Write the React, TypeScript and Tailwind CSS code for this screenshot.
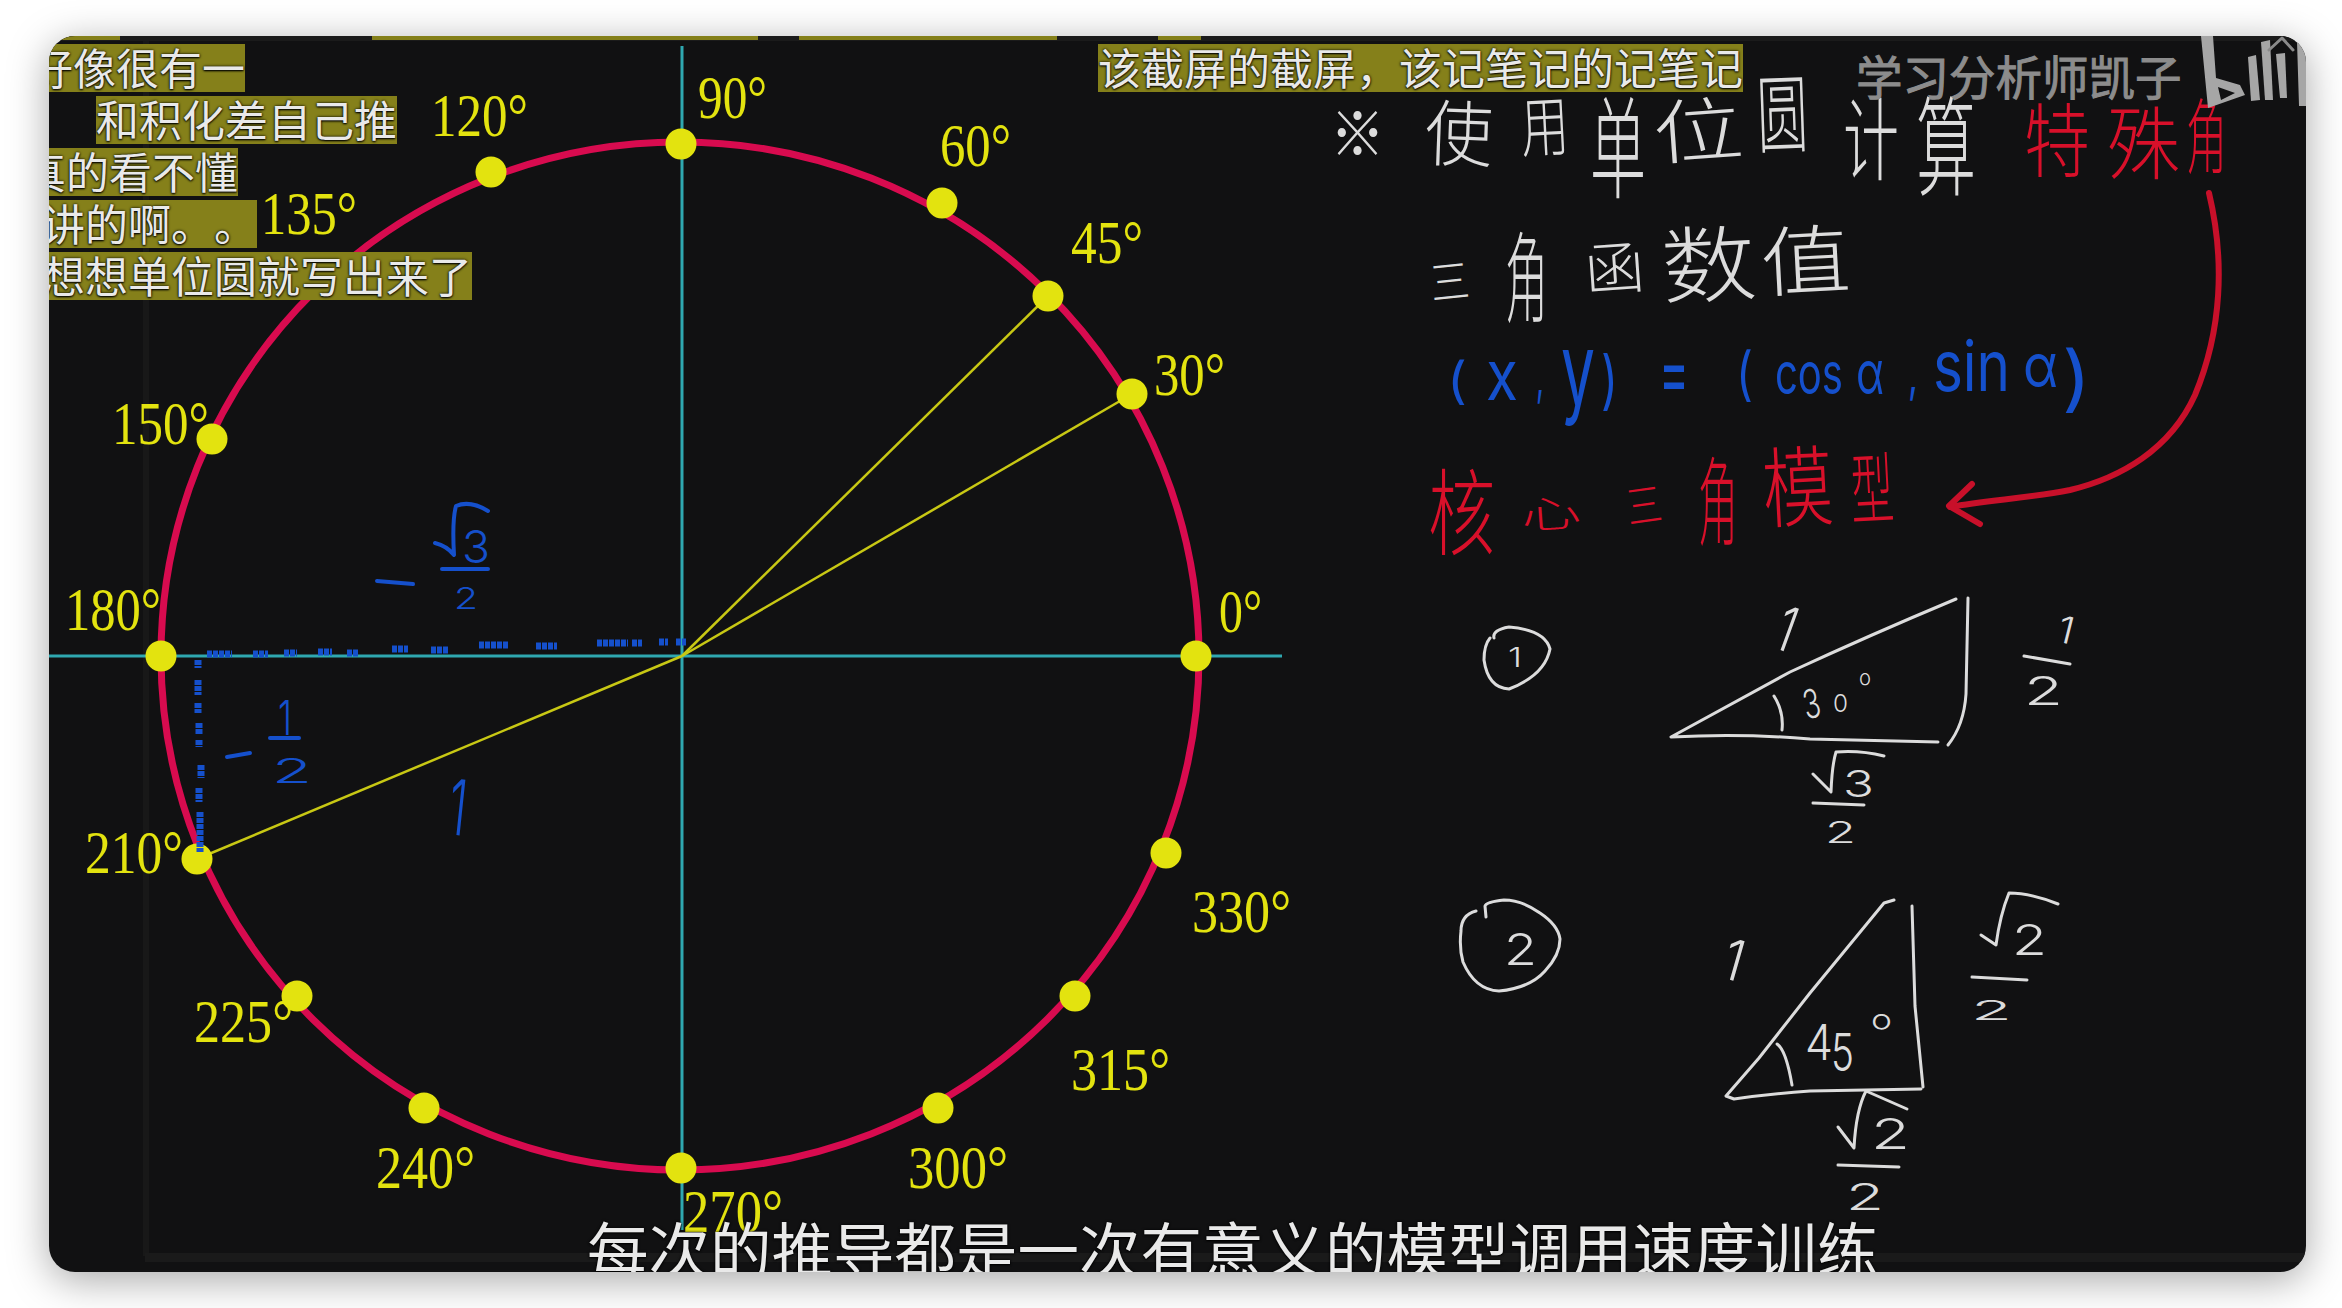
import React from "react";

const WHITE = "#dcdcdc";
const RED = "#d8102a";
const BLUE = "#1550cc";
const YELLOW = "#e3e30f";
const CJK = "'Noto Sans CJK SC', sans-serif";
const NUM = "Inter, sans-serif";

// 单位圆上的点
const DOTS = [
  [681, 144], [942, 203], [1048, 296], [1132, 394], [1196, 656], [1166, 853],
  [1075, 996], [938, 1108], [681, 1168], [424, 1108], [297, 996], [197, 859],
  [161, 656], [212, 439], [491, 172],
];

// label, x, width, baseline
const LABELS: [string, number, number, number][] = [
  ["90°", 698, 69, 118], ["120°", 431, 97, 136], ["135°", 261, 96, 234],
  ["150°", 112, 97, 444], ["60°", 940, 71, 166], ["45°", 1071, 72, 263],
  ["30°", 1154, 71, 395], ["0°", 1219, 43, 632], ["180°", 65, 96, 630],
  ["210°", 85, 98, 873], ["330°", 1192, 99, 932], ["225°", 194, 99, 1042],
  ["315°", 1071, 99, 1090], ["240°", 376, 99, 1188], ["300°", 908, 100, 1188],
  ["270°", 683, 100, 1232],
];

const DASHES_H = [
  [207, 232, 654], [253, 268, 654], [284, 297, 653], [318, 332, 652], [347, 358, 653],
  [392, 408, 649], [431, 449, 650], [479, 508, 645], [536, 557, 646], [597, 628, 643],
  [632, 642, 643], [659, 668, 642], [676, 686, 642],
];
const DASHES_V = [
  [198, 660, 668], [198, 680, 695], [198, 703, 713], [199, 723, 735],
  [199, 740, 747], [201, 765, 778], [199, 788, 802], [200, 812, 852],
];

// 手写汉字: box = [x0, y0, x1, y1]
const Hand = ({ t, b, fill = WHITE, rot = 0 }: { t: string; b: number[]; fill?: string; rot?: number }) => {
  const w = b[2] - b[0];
  const h = b[3] - b[1];
  return (
    <text
      transform={`translate(${b[0]} ${b[1] + 0.88 * h}) rotate(${rot}) scale(${w / 100} ${h / 100})`}
      fontSize={100}
      fontFamily={CJK}
      fontWeight={300}
      fill={fill}
    >
      {t}
    </text>
  );
};

// 手写数字: box = [x0, y0, x1, y1]
const Digit = ({ t, b, fill = WHITE, rot = 0 }: { t: string; b: number[]; fill?: string; rot?: number }) => (
  <text
    x={b[0]}
    y={b[3]}
    fontSize={(b[3] - b[1]) / 0.727}
    textLength={b[2] - b[0]}
    lengthAdjust="spacingAndGlyphs"
    fontFamily={NUM}
    fontWeight={300}
    fill={fill}
    transform={rot ? `rotate(${rot} ${(b[0] + b[2]) / 2} ${(b[1] + b[3]) / 2})` : undefined}
  >
    {t}
  </text>
);

const Formula = ({ t, x, w, y, fs }: { t: string; x: number; w: number; y: number; fs: number }) => (
  <text x={x} y={y} fontSize={fs} textLength={w} lengthAdjust="spacingAndGlyphs" fontFamily={NUM} fontWeight={400} fill={BLUE}>
    {t}
  </text>
);

const Ink = ({ d, color = WHITE, width = 3 }: { d: string; color?: string; width?: number }) => (
  <path d={d} fill="none" stroke={color} strokeWidth={width} strokeLinecap="round" strokeLinejoin="round" />
);

const Board = () => (
  <svg className="absolute inset-0 h-full w-full" viewBox="49 36 2257 1236">
    {/* 视频边框 */}
    <rect x="49" y="36" width="2257" height="5" fill="#1b1b1b" />
    <rect x="143" y="41" width="6" height="1215" fill="#181818" />
    <rect x="145" y="1253" width="2161" height="9" fill="#1a1a1a" />

    {/* 坐标轴 */}
    <line x1="49" y1="656" x2="1282" y2="656" stroke="#2fa8b0" strokeWidth="3" />
    <line x1="682" y1="46" x2="682" y2="1230" stroke="#2fa8b0" strokeWidth="3" />
    <ellipse cx="680" cy="656" rx="519" ry="514" fill="none" stroke="#d80b4f" strokeWidth="7" />
    <g stroke="#c8c814" strokeWidth="2.5">
      <line x1="682" y1="656" x2="1048" y2="296" />
      <line x1="682" y1="656" x2="1132" y2="394" />
      <line x1="682" y1="656" x2="197" y2="859" />
    </g>
    {LABELS.map(([t, x, w, y]) => (
      <text key={t} x={x} y={y} fontSize={62} textLength={w} lengthAdjust="spacingAndGlyphs" fontFamily="'Liberation Serif', serif" fill={YELLOW}>
        {t}
      </text>
    ))}
    {DOTS.map(([x, y]) => (
      <circle key={`${x}-${y}`} cx={x} cy={y} r="15.5" fill={YELLOW} />
    ))}

    {/* 蓝色虚线和标注 */}
    <g stroke={BLUE} strokeWidth="7" strokeDasharray="5 1">
      {DASHES_H.map(([a, b, y]) => <line key={a} x1={a} y1={y} x2={b} y2={y} />)}
      {DASHES_V.map(([x, a, b]) => <line key={a} x1={x} y1={a} x2={x} y2={b} />)}
    </g>
    <Ink d="M377 581 L413 584" color={BLUE} width={4} />
    <Ink d="M435 543 Q447 546 454 555 Q452 520 456 506 Q470 500 488 511" color={BLUE} width={4} />
    <Digit t="3" b={[462, 530, 490, 563]} fill={BLUE} />
    <Ink d="M442 569 L488 569" color={BLUE} width={4} />
    <Digit t="2" b={[454, 587, 478, 609]} fill={BLUE} />
    <Ink d="M227 757 L250 753" color={BLUE} width={4} />
    <Digit t="1" b={[278, 700, 292, 735]} fill={BLUE} />
    <Ink d="M270 738 L299 738" color={BLUE} width={4} />
    <Digit t="2" b={[272, 758, 312, 783]} fill={BLUE} />
    <Digit t="1" b={[449, 779, 467, 835]} fill={BLUE} rot={6} />

    {/* 板书 */}
    <Hand t="※" b={[1330, 103, 1385, 163]} />
    <Hand t="使" b={[1424, 96, 1492, 168]} rot={2} />
    <Hand t="用" b={[1522, 94, 1570, 160]} rot={-3} />
    <Hand t="单" b={[1590, 92, 1646, 203]} />
    <Hand t="位" b={[1655, 98, 1745, 168]} rot={-4} />
    <Hand t="圆" b={[1758, 71, 1809, 157]} rot={-2} />
    <Hand t="计" b={[1843, 94, 1899, 184]} />
    <Hand t="算" b={[1916, 92, 1976, 200]} />
    <Hand t="特" b={[2024, 100, 2090, 180]} fill={RED} />
    <Hand t="殊" b={[2107, 103, 2180, 182]} fill={RED} />
    <Hand t="角" b={[2186, 95, 2227, 177]} fill={RED} />

    <Hand t="三" b={[1432, 260, 1471, 306]} rot={-6} />
    <Hand t="角" b={[1505, 228, 1548, 327]} />
    <Hand t="函" b={[1586, 241, 1646, 298]} rot={-4} />
    <Hand t="数" b={[1663, 224, 1758, 308]} rot={-3} />
    <Hand t="值" b={[1762, 224, 1852, 300]} rot={-3} />

    <Formula t="(" x={1447} w={20} y={398} fs={50} />
    <Formula t="x" x={1486} w={32} y={400} fs={70} />
    <Formula t="," x={1536} w={8} y={395} fs={50} />
    <Formula t="y" x={1561} w={34} y={405} fs={100} />
    <Formula t=")" x={1601} w={17} y={402} fs={64} />
    <Formula t="=" x={1659} w={30} y={400} fs={80} />
    <Formula t="(" x={1736} w={17} y={394} fs={58} />
    <Formula t="cos" x={1775} w={68} y={394} fs={58} />
    <Formula t="α" x={1856} w={28} y={394} fs={60} />
    <Formula t="," x={1908} w={10} y={392} fs={50} />
    <Formula t="sin" x={1933} w={77} y={391} fs={70} />
    <Formula t="α" x={2023} w={35} y={387} fs={60} />
    <Formula t=")" x={2062} w={29} y={403} fs={72} />

    <Hand t="核" b={[1428, 465, 1495, 559]} fill={RED} />
    <Hand t="心" b={[1522, 496, 1582, 534]} fill={RED} rot={-4} />
    <Hand t="三" b={[1629, 484, 1664, 530]} fill={RED} rot={-8} />
    <Hand t="角" b={[1698, 453, 1738, 549]} fill={RED} />
    <Hand t="模" b={[1764, 444, 1835, 532]} fill={RED} rot={-3} />
    <Hand t="型" b={[1852, 450, 1895, 528]} fill={RED} rot={-3} />

    <Ink d="M2209 193 C2225 260 2222 330 2195 395 C2170 450 2120 478 2070 490 C2030 498 1990 500 1950 507" color="#c8102a" width={6} />
    <Ink d="M1972 484 L1949 506 L1980 524" color="#c8102a" width={6} />

    {/* 三角形 1 */}
    <Ink d="M1494 638 Q1492 630 1509 627 Q1545 630 1550 649 Q1545 675 1509 689 Q1488 688 1484 660 Q1484 645 1490 638" />
    <Digit t="1" b={[1508, 647, 1522, 667]} />
    <Ink d="M1956 599 Q1870 635 1790 672 L1671 737 Q1740 733 1810 739 L1938 742" />
    <Ink d="M1968 598 L1966 694 Q1964 725 1948 745" />
    <Digit t="1" b={[1778, 606, 1796, 651]} rot={20} />
    <Ink d="M1774 696 Q1784 712 1782 730" />
    <Digit t="3" b={[1803, 689, 1820, 718]} rot={-12} />
    <Digit t="0" b={[1833, 694, 1848, 712]} />
    <Digit t="o" b={[1859, 669, 1871, 685]} />
    <Ink d="M1813 774 L1831 792 Q1832 765 1836 752 Q1860 750 1884 756" />
    <Digit t="3" b={[1843, 770, 1874, 797]} />
    <Ink d="M1813 803 L1864 805" />
    <Digit t="2" b={[1825, 821, 1856, 843]} />
    <Digit t="1" b={[2058, 616, 2074, 643]} rot={14} />
    <Ink d="M2024 656 L2070 664" />
    <Digit t="2" b={[2024, 676, 2063, 705]} />

    {/* 三角形 2 */}
    <Ink d="M1476 911 Q1461 915 1461 931 Q1459 948 1463 962 Q1475 990 1499 991 Q1530 988 1545 971 Q1560 955 1560 939 Q1558 925 1540 913 Q1522 900 1504 900 Q1486 902 1485 906 L1486 917" />
    <Digit t="2" b={[1504, 933, 1537, 965]} />
    <Ink d="M1894 900 L1884 903 L1810 993 L1759 1058 L1726 1096 L1734 1099 Q1770 1094 1810 1091 L1921 1089" />
    <Ink d="M1912 906 L1915 1006 L1923 1087" />
    <Digit t="1" b={[1724, 939, 1744, 980]} rot={16} />
    <Ink d="M1777 1044 Q1786 1050 1792 1085" />
    <Digit t="4" b={[1805, 1024, 1833, 1060]} />
    <Digit t="5" b={[1831, 1033, 1854, 1071]} />
    <Digit t="o" b={[1871, 1009, 1892, 1029]} />
    <Ink d="M1838 1127 L1854 1148 Q1856 1110 1866 1091 L1907 1109" />
    <Digit t="2" b={[1871, 1118, 1910, 1149]} />
    <Ink d="M1838 1165 L1899 1167" />
    <Digit t="2" b={[1846, 1183, 1884, 1210]} />
    <Ink d="M1981 935 L1996 945 Q2000 915 2009 893 Q2030 893 2058 904" />
    <Digit t="2" b={[2012, 924, 2047, 955]} />
    <Ink d="M1972 977 L2027 980" />
    <Digit t="2" b={[1971, 1000, 2012, 1020]} />

    {/* bilibili 水印 */}
    <g fill="#a6a6a6">
      <path d="M2201 36 H2213 L2216 78 L2240 85 L2245 95 L2208 108 Z M2218 87 L2221 100 L2235 93 Z" fillRule="evenodd" />
      <path d="M2248 57 L2256 55 L2260 100 L2251 101 Z" />
      <path d="M2261 42 L2270 40 L2273 100 L2265 100 Z" />
      <path d="M2276 54 L2285 53 L2287 98 L2280 98 Z" />
      <path d="M2297 42 L2306 40 V106 H2299 Z" />
    </g>
    <Ink d="M2269 50 L2282 38 L2293 50" color="#8a8a8a" width={3} />
  </svg>
);

const tagClass =
  "flex h-12 items-center justify-end overflow-hidden whitespace-nowrap bg-[#85801a] pb-1 text-[43px] text-[#e9e9e9] [text-spacing-trim:space-all] [text-shadow:0_0_3px_#000,0_1px_2px_#000]";

export default function App() {
  return (
    <div className="h-[1308px] w-[2342px] overflow-hidden bg-white pl-[49px] pt-9 [font-family:'Noto_Sans_CJK_SC',sans-serif]">
      <div className="relative h-[1236px] w-[2257px] overflow-hidden rounded-[26px] bg-[#111112] shadow-[0_8px_40px_rgba(0,0,0,0.35)]">
        <Board />

        {/* 弹幕和字幕 */}
        <div className="absolute inset-0 flex flex-col">
          {/* 顶部被裁掉的弹幕 */}
          <div className="flex h-1 shrink-0">
            <div className="w-[71px] bg-[#85801a]" />
            <div className="ml-[252px] w-[386px] bg-[#85801a]" />
            <div className="ml-[41px] w-[258px] bg-[#85801a]" />
            <div className="ml-[101px] w-[43px] bg-[#85801a]" />
          </div>

          <div className="mt-1 flex items-start">
            <div className="flex w-[423px] shrink-0 flex-col items-start gap-1">
              <div className={`${tagClass} w-[196px]`}>好像很有一</div>
              <div className={`${tagClass} ml-[47px] w-[301px]`}>和积化差自己推</div>
              <div className={`${tagClass} w-[189px]`}>真的看不懂</div>
              <div className={`${tagClass} w-[208px]`}>讲的啊。。</div>
              <div className={`${tagClass} w-[423px]`}>想想单位圆就写出来了</div>
            </div>
            <div className={`${tagClass} ml-[626px] w-[645px] shrink-0`}>该截屏的截屏，该记笔记的记笔记</div>
            <div className="ml-[113px] mt-[3px] whitespace-nowrap text-[46.5px] leading-[56px] text-[#8c8c8c] [-webkit-text-stroke:1px_#8c8c8c]">学习分析师凯子</div>
          </div>

          <div className="-mb-[14px] ml-[538px] mt-auto whitespace-nowrap text-[61.5px] leading-[76px] text-[#e9e9e9] [text-shadow:0_0_3px_#000,0_1px_2px_#000]">
            每次的推导都是一次有意义的模型调用速度训练
          </div>
        </div>
      </div>
    </div>
  );
}
